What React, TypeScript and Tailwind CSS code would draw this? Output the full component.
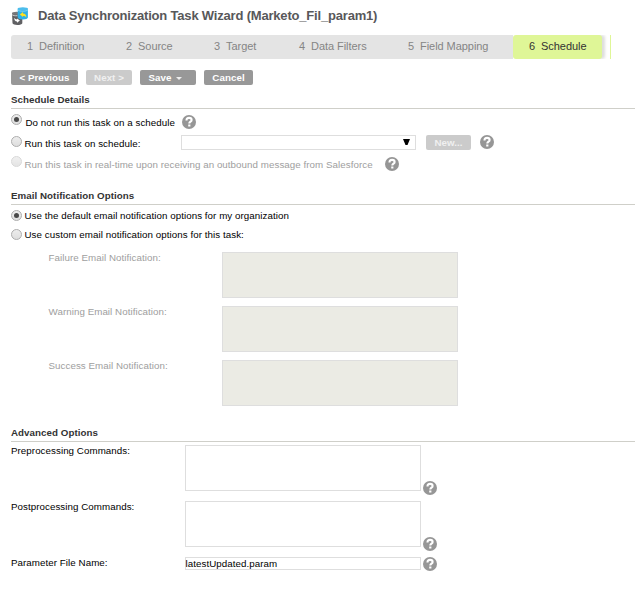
import type { ReactNode } from "react";

const STEPS = [
  { n: 1, label: "Definition", width: "w-[99px]" },
  { n: 2, label: "Source", width: "w-[88px]" },
  { n: 3, label: "Target", width: "w-[85px]" },
  { n: 4, label: "Data Filters", width: "w-[109px]" },
  { n: 5, label: "Field Mapping", width: "w-[121px]" }
];

const NOTIFICATIONS = ["Failure", "Warning", "Success"];

const COMMANDS = ["Preprocessing Commands:", "Postprocessing Commands:"];

function TaskIcon() {
  return (
    <svg width="18" height="19" viewBox="0 0 18 19" className="shrink-0">
      <path d="M1 6.500l.5 9.800c.5 1.200 2.200 1.700 4.800 1.700s4.700-.6 5-1.800V6z" fill="#606063" />
      <ellipse cx="5.500" cy="6.200" rx="4.500" ry="1.500" fill="#77777a" />
      <path d="M1 7.600c1 1 3 1.300 5.500 1.100" stroke="#d8d8d8" strokeWidth=".9" fill="none" />
      <path d="M3.200 10.800c0 2.500 1 3.500 2.800 3.800v1.200l2.900-2.200-2.900-2.200v1.200c-1.200-.2-2-.8-2.800-1.800z" fill="#fff" />
      <path d="M6.700 1.800v8.700c.2 1.200 2.200 1.900 5.200 1.900s4.800-.8 5-2V1.800z" fill="#2fb0e6" />
      <ellipse cx="11.800" cy="1.700" rx="5.100" ry="1.500" fill="#4cbdec" />
      <path d="M6.700 2.800c1 1.100 3 1.400 5.100 1.400s4.100-.3 5.100-1.400" stroke="#a8e0f7" strokeWidth=".7" fill="none" />
      <path d="M8.800 7.500l3.200-2.400v1.400c2.300 0 3.300 1.300 3.300 3.700-.8-1-1.700-1.300-3.300-1.300v1.200z" fill="#ffe01f" />
    </svg>
  );
}

function Help({ className = "" }: { className?: string }) {
  return (
    <svg width="14" height="14" viewBox="0 0 14 14" className={`shrink-0 ${className}`}>
      <circle cx="7" cy="7" r="7" fill="#969696" />
      <path
        d="M4.500 5.400C4.500 3.600 5.500 2.900 7.100 2.900s2.500.8 2.500 2c0 1.900-2.300 1.700-2.300 3.700"
        stroke="#fff"
        strokeWidth="2.100"
        fill="none"
      />
      <rect x="6.200" y="9.500" width="2.200" height="2" fill="#fff" />
    </svg>
  );
}

function Radio({ checked = false, disabled = false }: { checked?: boolean; disabled?: boolean }) {
  return (
    <span
      className={`flex h-[11px] w-[11px] shrink-0 items-center justify-center rounded-full border bg-linear-to-b from-[#ededed] to-[#dedede] ${
        disabled ? "border-[#cfcfcf] opacity-80" : "border-[#adadad]"
      }`}
    >
      {checked && <span className="h-[5px] w-[5px] rounded-full bg-[#484848]" />}
    </span>
  );
}

function Button({ className, disabled = false, children }: { className: string; disabled?: boolean; children: ReactNode }) {
  return (
    <button
      type="button"
      disabled={disabled}
      className={`flex h-[15px] shrink-0 items-center justify-center rounded-[2px] text-[9.75px] leading-[16px] font-bold whitespace-nowrap ${className} ${
        disabled ? "bg-[#cbcbcb] text-[#f0f0f0]" : "bg-[#989898] text-white"
      }`}
    >
      {children}
    </button>
  );
}

function SectionTitle({ children }: { children: ReactNode }) {
  return (
    <h2 className="h-[18px] border-b border-[#cfcfc9] text-[9.75px] leading-[18px] font-bold tracking-[0.05px] text-[#333]">
      {children}
    </h2>
  );
}

export default function App() {
  return (
    <main className="h-[613px] w-[635px] overflow-hidden bg-white pl-[11px] font-['Liberation_Sans',Arial,sans-serif] text-[9.75px] leading-3 tracking-[0.06px] whitespace-nowrap text-black">
      <header className="flex h-[35px] items-start pt-[7px]">
        <TaskIcon />
        <h1 className="ml-[9px] text-[13px] leading-[17px] font-bold tracking-[-0.19px] text-[#58585a]">
          Data Synchronization Task Wizard (Marketo_Fil_param1)
        </h1>
      </header>

      <nav className="flex h-6 text-[11px] leading-[23px] tracking-[-0.06px] text-[#858585]">
        <div className="flex rounded-l-[3px] bg-[#e4e4e4]">
          {STEPS.map((step) => (
            <div key={step.n} className={`flex gap-[6px] pl-4 ${step.width}`}>
              <span>{step.n}</span>
              <span>{step.label}</span>
            </div>
          ))}
        </div>
        <div className="flex w-[89px] gap-[6px] rounded-[3px] bg-[#dff697] pl-4 text-[#333] shadow-[3px_0_3px_#ddd] [clip-path:inset(0_-8px_0_0)]">
          <span>6</span>
          <span>Schedule</span>
        </div>
        <div className="ml-2 w-px bg-[#dff697]" />
      </nav>

      <div className="mt-[11px] flex gap-2">
        <Button className="w-[67px]">&lt; Previous</Button>
        <Button className="w-[46px]" disabled>
          Next &gt;
        </Button>
        <Button className="w-14 gap-1 pr-1.5 pl-0">
          Save
          <span className="mt-0.5 border-x-[3.5px] border-t-[3px] border-x-transparent border-t-[#eee]" />
        </Button>
        <Button className="w-[49px]">Cancel</Button>
      </div>

      <section className="mt-[6px]">
        <SectionTitle>Schedule Details</SectionTitle>
        <div className="flex h-[25px] items-start pt-[5px]">
          <Radio checked />
          <span className="mt-[3px] ml-[3.5px] w-[150px]">Do not run this task on a schedule</span>
          <Help className="mt-px ml-[6.5px]" />
        </div>
        <div className="flex h-5 items-start pt-px">
          <div className="flex w-[170px] items-start">
            <div className="mt-px">
              <Radio />
            </div>
            <span className="mt-[3px] ml-[2.5px]">Run this task on schedule:</span>
          </div>
          <div className="flex h-[15px] w-[235px] items-center justify-end border border-[#dedede] pr-[5px]">
            <svg width="7" height="7" viewBox="0 0 7 7">
              <path d="M0 0h7L4.500 6h-2z" fill="#000" />
            </svg>
          </div>
          <Button className="ml-[10px] w-[45px]" disabled>
            New...
          </Button>
          <Help className="ml-[9px]" />
        </div>
        <div className="flex h-[33px] items-start pt-[2px]">
          <Radio disabled />
          <span className="mt-[3px] ml-[2.5px] w-[350px] text-[#9e9e9e]">
            Run this task in real-time upon receiving an outbound message from Salesforce
          </span>
          <Help className="mt-px ml-[10.5px]" />
        </div>
      </section>

      <section>
        <SectionTitle>Email Notification Options</SectionTitle>
        <div className="flex h-[19px] items-center pt-[2px]">
          <Radio checked />
          <span className="ml-[2.5px]">Use the default email notification options for my organization</span>
        </div>
        <div className="flex h-[19px] items-center pt-[2px]">
          <Radio />
          <span className="ml-[2.5px]">Use custom email notification options for this task:</span>
        </div>
        <div className="flex flex-col gap-2 pt-[9px] pl-[37.5px]">
          {NOTIFICATIONS.map((kind) => (
            <div key={kind} className="flex h-[46px]">
              <span className="w-[173.5px] text-[#9e9e9e]">{kind} Email Notification:</span>
              <div className="w-[236px] border border-[#dedede] bg-[#ebebe4]" />
            </div>
          ))}
        </div>
      </section>

      <section className="mt-[18px]">
        <SectionTitle>Advanced Options</SectionTitle>
        <div className="flex flex-col gap-[10px] pt-[3px]">
          {COMMANDS.map((label) => (
            <div key={label} className="flex h-[46px]">
              <span className="w-[174px]">{label}</span>
              <div className="w-[236px] border border-[#dedede]" />
              <Help className="mt-9 ml-[2px]" />
            </div>
          ))}
          <div className="flex h-[13px]">
            <span className="w-[174px]">Parameter File Name:</span>
            <div className="w-[236px] border border-[#dedede] leading-[12px] -indent-[0.5px]">latestUpdated.param</div>
            <Help className="ml-[2px]" />
          </div>
        </div>
      </section>
    </main>
  );
}
